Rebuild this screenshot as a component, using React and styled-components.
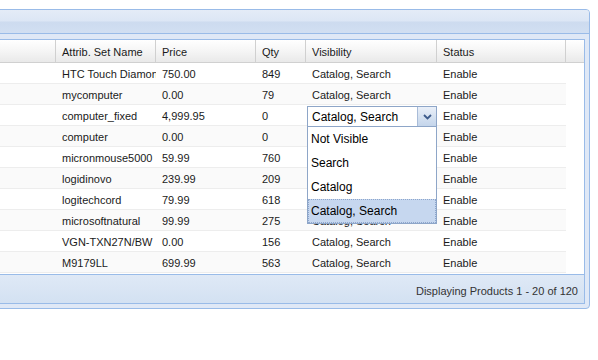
import React from "react";
import styled, { createGlobalStyle } from "styled-components";

const columns = "60px 100px 100px 50px 131px 129px";

// visibility of rows 4-7 sits under the open combo list
const rows = [
  ["HTC Touch Diamond", "750.00", "849", "Catalog, Search", "Enable"],
  ["mycomputer", "0.00", "79", "Catalog, Search", "Enable"],
  ["computer_fixed", "4,999.95", "0", "", "Enable"],
  ["computer", "0.00", "0", "", "Enable"],
  ["micronmouse5000", "59.99", "760", "", "Enable"],
  ["logidinovo", "239.99", "209", "", "Enable"],
  ["logitechcord", "79.99", "618", "", "Enable"],
  ["microsoftnatural", "99.99", "275", "Catalog, Search", "Enable"],
  ["VGN-TXN27N/BW", "0.00", "156", "Catalog, Search", "Enable"],
  ["M9179LL", "699.99", "563", "Catalog, Search", "Enable"],
];

const options = ["Not Visible", "Search", "Catalog", "Catalog, Search"];

const GlobalStyle = createGlobalStyle`
  body {
    margin: 0;
    background: #fff;
    font-family: "Liberation Sans", Arial, sans-serif;
  }
`;

const Page = styled.div`
  width: 598px;
  height: 360px;
  overflow: hidden;
  padding-top: 9px;
  box-sizing: border-box;
`;

const Panel = styled.div`
  margin-left: -10px;
  width: 600px;
  box-sizing: border-box;
  border: 1px solid #99bbe8;
  border-radius: 4px;
  background: #dfe8f6;
  overflow: hidden;
`;

const PanelHeader = styled.div`
  height: 23px;
  border-bottom: 1px solid #99bbe8;
  background: linear-gradient(#e4ecf7 0%, #dce6f5 48%, #cddbef 52%, #d1dff2 100%);
`;

const Frame = styled.div`
  padding: 5px 4px 4px;
`;

const Grid = styled.div`
  position: relative;
  border: 1px solid #99bbe8;
  background: #fff;
  font-size: 11px;
  color: #1a1a1a;
`;

const HeaderRow = styled.div`
  display: grid;
  grid-template-columns: ${columns} 18px;
  height: 23px;
  box-sizing: border-box;
  border-bottom: 1px solid #d0d0d0;
  background: linear-gradient(#ffffff 0%, #f5f5f5 50%, #e9e9e9 100%);
`;

const HeaderCell = styled.div`
  border-right: ${(p) => (p.$last ? "none" : "1px solid #d0d0d0")};
  padding: 1px 6px 0;
  line-height: 22px;
  white-space: nowrap;
  overflow: hidden;
`;

const Row = styled.div`
  display: grid;
  grid-template-columns: ${columns};
  width: 570px;
  height: 21px;
  box-sizing: border-box;
  border-bottom: 1px solid #ededed;
  background: ${(p) => (p.$alt ? "#fafafa" : "#fff")};
`;

const Cell = styled.div`
  padding: 1px 6px 0;
  line-height: 20px;
  white-space: nowrap;
  overflow: hidden;
`;

const BodyEnd = styled.div`
  height: 1px;
`;

const Combo = styled.div`
  position: absolute;
  left: 311px;
  top: 66px;
  width: 130px;
  height: 21px;
  box-sizing: border-box;
  display: flex;
  border: 1px solid #8ea6c8;
  background: #fff;
  font-size: 12px;
  color: #000;
`;

const ComboText = styled.div`
  flex: 1;
  padding: 1px 0 0 4px;
  line-height: 19px;
  white-space: nowrap;
`;

const Trigger = styled.div`
  width: 18px;
  border-left: 1px solid #a9bcd8;
  background: linear-gradient(#eaf0f9 0%, #d6e2f1 50%, #c4d5eb 100%);
  display: flex;
  align-items: center;
  justify-content: center;
`;

const List = styled.div`
  position: absolute;
  left: 311px;
  top: 87px;
  width: 130px;
  box-sizing: border-box;
  border: 1px solid #8ea6c8;
  border-top: none;
  background: #fff;
  font-size: 12px;
  color: #000;
`;

const Option = styled.div`
  height: 24px;
  box-sizing: border-box;
  padding: 1px 0 0 ${(p) => (p.$selected ? "2px" : "3px")};
  line-height: ${(p) => (p.$selected ? "21px" : "23px")};
  white-space: nowrap;
  background: ${(p) => (p.$selected ? "#c6d7ef" : "#fff")};
  border: ${(p) => (p.$selected ? "1px dotted #8ea6cc" : "none")};
`;

const Toolbar = styled.div`
  height: 25px;
  border: 1px solid #99bbe8;
  border-top: none;
  background: linear-gradient(#dfe9f6 0%, #d3e1f2 100%);
  display: flex;
  align-items: center;
  justify-content: flex-end;
  padding: 3px 6px 0 0;
  font-size: 11px;
  color: #333;
`;

const Chevron = () => (
  <svg width="9" height="6" viewBox="0 0 9 6">
    <polyline points="1,1 4.5,4.5 8,1" fill="none" stroke="#3d5b8b" strokeWidth="1.8" />
  </svg>
);

const App = () => {
  return (
    <Page>
      <GlobalStyle />
      <Panel>
        <PanelHeader />
        <Frame>
          <Grid>
            <HeaderRow>
              <HeaderCell />
              <HeaderCell>Attrib. Set Name</HeaderCell>
              <HeaderCell>Price</HeaderCell>
              <HeaderCell>Qty</HeaderCell>
              <HeaderCell>Visibility</HeaderCell>
              <HeaderCell>Status</HeaderCell>
              <HeaderCell $last />
            </HeaderRow>
            {rows.map((r, i) => (
              <Row key={i} $alt={i % 2 === 1}>
                <Cell />
                {r.map((v, j) => (
                  <Cell key={j}>{v}</Cell>
                ))}
              </Row>
            ))}
            <BodyEnd />
            <Combo>
              <ComboText>Catalog, Search</ComboText>
              <Trigger>
                <Chevron />
              </Trigger>
            </Combo>
            <List>
              {options.map((o, i) => (
                <Option key={o} $selected={i === options.length - 1}>
                  {o}
                </Option>
              ))}
            </List>
          </Grid>
          <Toolbar>Displaying Products 1 - 20 of 120</Toolbar>
        </Frame>
      </Panel>
    </Page>
  );
};

export default App;
